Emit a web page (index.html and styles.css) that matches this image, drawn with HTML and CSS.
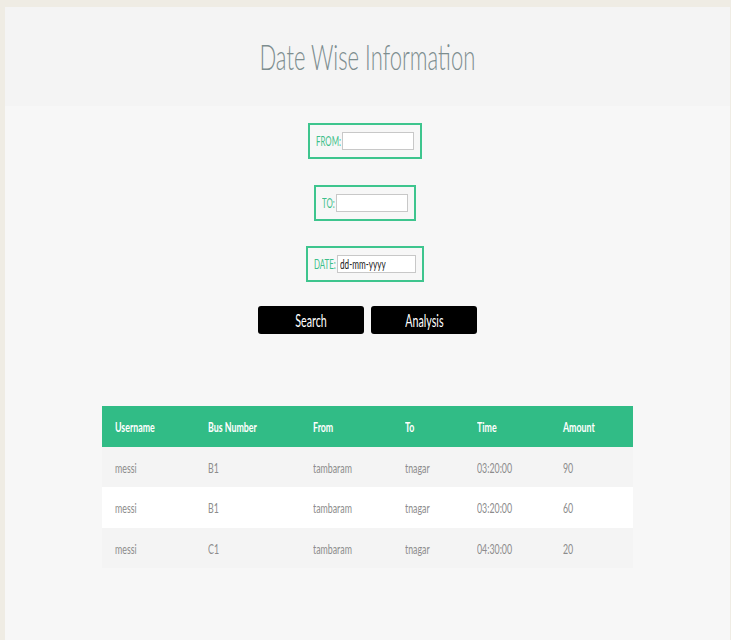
FILE: index.html
```html
<!DOCTYPE html>
<html>
<head>
<meta charset="utf-8">
<link rel="stylesheet" href="styles.css">
</head>
<body>
<div class="page">
  <header class="header">
    <h1 class="title"><span class="n">Date Wise Information</span></h1>
  </header>
  <main class="content">
    <form class="filters">
      <div class="field field-from">
        <label class="lbl"><span class="n">FROM:</span></label>
        <input class="inp" type="text">
      </div>
      <div class="field field-to">
        <label class="lbl"><span class="n">TO:</span></label>
        <input class="inp" type="text">
      </div>
      <div class="field field-date">
        <label class="lbl"><span class="n">DATE:</span></label>
        <div class="inp inp-date"><span class="n">dd-mm-yyyy</span></div>
      </div>
      <div class="buttons">
        <button class="btn" type="button"><span class="n">Search</span></button>
        <button class="btn" type="button"><span class="n">Analysis</span></button>
      </div>
    </form>
    <table class="data">
      <colgroup>
        <col class="c1"><col class="c2"><col class="c3"><col class="c4"><col class="c5"><col class="c6">
      </colgroup>
      <thead>
        <tr>
          <th><span class="n">Username</span></th>
          <th><span class="n">Bus Number</span></th>
          <th><span class="n">From</span></th>
          <th><span class="n">To</span></th>
          <th><span class="n">Time</span></th>
          <th><span class="n">Amount</span></th>
        </tr>
      </thead>
      <tbody>
        <tr>
          <td><span class="n">messi</span></td>
          <td><span class="n">B1</span></td>
          <td><span class="n">tambaram</span></td>
          <td><span class="n">tnagar</span></td>
          <td><span class="n">03:20:00</span></td>
          <td><span class="n">90</span></td>
        </tr>
        <tr>
          <td><span class="n">messi</span></td>
          <td><span class="n">B1</span></td>
          <td><span class="n">tambaram</span></td>
          <td><span class="n">tnagar</span></td>
          <td><span class="n">03:20:00</span></td>
          <td><span class="n">60</span></td>
        </tr>
        <tr>
          <td><span class="n">messi</span></td>
          <td><span class="n">C1</span></td>
          <td><span class="n">tambaram</span></td>
          <td><span class="n">tnagar</span></td>
          <td><span class="n">04:30:00</span></td>
          <td><span class="n">20</span></td>
        </tr>
      </tbody>
    </table>
  </main>
</div>
</body>
</html>
```

FILE: styles.css
```css
* { box-sizing: border-box; }

html, body {
  margin: 0;
  padding: 0;
}

body {
  background: #efece4;
  padding: 7px 1px 0 5px;
  font-family: Lato, "Open Sans", sans-serif;
}

.n {
  display: inline-block;
  white-space: nowrap;
  transform: scaleX(0.63);
}

.page {
  background: #f7f7f7;
  min-height: 633px;
}

.header {
  height: 99px;
  background: #f4f4f4;
  display: flex;
  align-items: center;
  justify-content: center;
}

.title {
  margin: 0;
  font-weight: 300;
  font-size: 35px;
  color: #7d8d8f;
  line-height: 1;
  text-align: center;
  width: 220px;
  display: flex;
  justify-content: center;
}

.title .n { transform-origin: center; }

.content {
  padding-top: 17px;
  display: flex;
  flex-direction: column;
  align-items: center;
}

.filters {
  display: flex;
  flex-direction: column;
  align-items: center;
  gap: 26px;
}

.field {
  display: flex;
  align-items: center;
  border: 2px solid #3ec58e;
  height: 36px;
  padding: 0 6px;
  margin-right: 6px;
}

.field-from { width: 114px; }
.field-to { width: 102px; }
.field-date { width: 118px; margin-top: -1px; }

.lbl {
  color: #3cbf8a;
  font-size: 12.5px;
  white-space: nowrap;
  overflow: visible;
  flex-shrink: 0;
}

.lbl .n { transform-origin: left center; }

.field-from .lbl { width: 26px; }
.field-to .lbl { width: 14px; }
.field-date .lbl { width: 23px; }

.inp {
  height: 18px;
  border: 1px solid #c8c8c8;
  background: #fff;
  padding: 0;
  margin: 0;
  flex-shrink: 0;
}

.field-from .inp { width: 72px; }
.field-to .inp { width: 72px; }
.field-date .inp { width: 79px; }

.inp-date {
  display: flex;
  align-items: center;
  padding-left: 2px;
  font-size: 13px;
  color: #222;
  overflow: hidden;
}

.inp-date .n { transform-origin: left center; }

.buttons {
  display: flex;
  gap: 7px;
  margin-top: -2px;
}

.btn {
  width: 106px;
  height: 28px;
  background: #000;
  color: #fff;
  border: none;
  border-radius: 3px;
  font-family: Lato, sans-serif;
  font-size: 17px;
  padding: 0;
  display: flex;
  align-items: center;
  justify-content: center;
}

.btn .n { transform-origin: center; }

.data {
  margin-top: 72px;
  width: 531px;
  border-collapse: collapse;
  table-layout: fixed;
}

.c1 { width: 93px; }
.c2 { width: 105px; }
.c3 { width: 92px; }
.c4 { width: 72px; }
.c5 { width: 86px; }
.c6 { width: 83px; }

.data th, .data td {
  text-align: left;
  padding: 0 0 0 13px;
  white-space: nowrap;
}

.data .n { transform-origin: left center; }

.data th {
  background: #31bc86;
  color: #fff;
  font-weight: 700;
  font-size: 14px;
  height: 41px;
}

.data td {
  color: #8c8c8c;
  font-size: 14px;
  height: 40px;
}

.data tbody tr:nth-child(odd) td { background: #f4f4f4; }
.data tbody tr:nth-child(even) td { background: #fff; height: 41px; }
```
